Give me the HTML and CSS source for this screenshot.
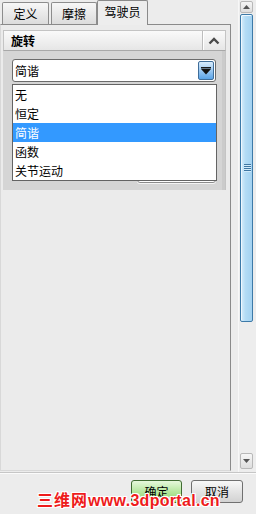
FILE: index.html
```html
<!DOCTYPE html>
<html lang="zh">
<head>
<meta charset="utf-8">
<link rel="stylesheet" href="styles.css">
</head>
<body>
<div class="window">
  <div class="main">
    <div class="left">
      <div class="tabs">
        <div class="tab tab-def">定义</div>
        <div class="tab tab-fric">摩擦</div>
        <div class="tab tab-active">驾驶员</div>
      </div>
      <div class="page">
        <div class="panel">
          <div class="panel-head">
            <span class="panel-title">旋转</span>
            <div class="collapse">
              <svg width="12" height="8" viewBox="0 0 12 8"><path d="M1.5 6.5 L6 2 L10.5 6.5" fill="none" stroke="#4a4a4a" stroke-width="2.4"/></svg>
            </div>
          </div>
          <div class="panel-body">
            <div class="combo">
              <span class="combo-text">简谐</span>
              <div class="combo-btn">
                <svg width="12" height="10" viewBox="0 0 12 10"><rect x="1" y="1" width="10" height="1.5" fill="#1a1a1a"/><path d="M1 3 L11 3 L6 8.5 Z" fill="#111"/></svg>
              </div>
            </div>
            <div class="hidden-field"></div>
            <ul class="list">
              <li>无</li>
              <li>恒定</li>
              <li class="sel">简谐</li>
              <li>函数</li>
              <li>关节运动</li>
            </ul>
          </div>
        </div>
      </div>
    </div>
    <div class="scrollbar">
      <div class="sb-btn sb-up"><svg width="7" height="4" viewBox="0 0 7 4"><path d="M0 4 L3.5 0 L7 4 Z" fill="#555"/></svg></div>
      <div class="sb-thumb">
        <div class="grip"><i></i><i></i><i></i><i></i></div>
      </div>
      <div class="sb-space"></div>
      <div class="sb-btn sb-down"><svg width="7" height="4" viewBox="0 0 7 4"><path d="M0 0 L7 0 L3.5 4 Z" fill="#555"/></svg></div>
    </div>
  </div>
  <div class="footer">
    <div class="btn btn-ok">确定</div>
    <div class="btn btn-cancel">取消</div>
  </div>
  <div class="watermark"><span class="wm-cn">三维网</span><span class="wm-en">www.3dportal.cn</span></div>
</div>
</body>
</html>
```
FILE: styles.css
```css
* { box-sizing: border-box; }
html, body { margin: 0; padding: 0; }
body {
  width: 256px;
  height: 514px;
  overflow: hidden;
  background: #ececec;
  font-family: "Noto Sans CJK SC", "Liberation Sans", sans-serif;
  font-size: 12px;
  color: #000;
}
.window { position: relative; width: 256px; height: 514px; display: flex; flex-direction: column; }
.main { height: 472px; display: flex; }
.left { width: 238px; display: flex; flex-direction: column; }

.tabs { height: 24px; display: flex; align-items: flex-end; position: relative; z-index: 2; }
.tab {
  height: 22px;
  border: 1px solid #8d8d8d;
  border-bottom: none;
  border-radius: 2px 2px 0 0;
  background: linear-gradient(#f7f7f7, #dcdcdc);
  display: flex; align-items: center; justify-content: center;
  line-height: 1;
  padding-top: 1px;
}
.tab-def { margin-left: 2px; width: 47px; }
.tab-fric { margin-left: 2px; width: 46px; }
.tab-active {
  margin-left: 0; width: 51px; height: 25px; margin-bottom: -1px;
  background: #ededed; border-color: #8a8a8a;
  padding-top: 0; padding-bottom: 2px;
}

.page {
  width: 231px;
  height: 447px;
  border: 1px solid #8a8a8a;
  border-left-color: #d8d8d8;
  border-bottom-color: #d8d8d8;
  background: #ebebeb;
  padding: 5px 4px 0 2px;
}
.panel { width: 223px; }
.panel-head {
  height: 21px;
  display: flex; align-items: center; justify-content: space-between;
  background: linear-gradient(#fafafa, #e6e6e6);
  border: 1px solid #c4c4c4;
  border-bottom-color: #a8a8a8;
}
.panel-title { font-weight: bold; padding-left: 7px; font-size: 12px; line-height: 1; }
.collapse {
  width: 23px; height: 19px;
  border-left: 1px solid #bdbdbd;
  box-shadow: inset 1px 0 #fff;
  display: flex; align-items: center; justify-content: center;
}
.panel-body {
  position: relative;
  background: #d5d5d5;
  border-right: 1px solid #c4c4c4;
  box-shadow: inset -3px 0 #cbcbcb;
  padding: 8px 0 7px 9px;
}
.combo {
  width: 204px; height: 23px;
  background: #fff;
  border: 1px solid #6b6b6b;
  border-radius: 3px;
  display: flex; align-items: center; justify-content: space-between;
  padding: 0 1px 0 2px;
}
.combo-text { line-height: 1; }
.combo-btn {
  width: 16px; height: 19px;
  border: 1px solid #3f6d99;
  border-radius: 2px;
  background: linear-gradient(#d8ecfc, #9cc9f2 50%, #5aa4e8);
  display: flex; align-items: center; justify-content: center;
}
.hidden-field {
  margin: 79px 0 0 125px;
  width: 79px; height: 22px;
  border: 1px solid #8c8c8c;
  border-radius: 3px;
  background: #fff;
  box-shadow: 0 1px 0 #f4f4f4;
}
.list {
  position: absolute; left: 9px; top: 33px;
  width: 205px;
  margin: 0; padding: 0; list-style: none;
  background: #fff;
  border: 1px solid #646464;
}
.list li { height: 19px; line-height: 19px; padding-left: 2px; }
.list li.sel { background: #3399ff; color: #fff; }

.scrollbar {
  width: 18px;
  display: flex; flex-direction: column;
  padding: 1px 3px 3px 1px;
  background: #ededed;
  border-left: 1px solid #f7f7f7;
}
.sb-btn {
  height: 12px;
  border: 1px solid #b8b8b8;
  border-radius: 2px;
  background: linear-gradient(#f6f6f6, #dedede);
  display: flex; align-items: center; justify-content: center;
}
.sb-down { height: 16px; }
.sb-thumb {
  margin-top: 1px;
  height: 308px;
  border: 1px solid #3d7aa8;
  border-radius: 2px;
  background: linear-gradient(90deg, #d9eefb, #b4dcf5 40%, #a3d2f1);
  box-shadow: inset 1px 1px #eef8ff;
  position: relative;
}
.grip {
  position: absolute; left: 3px; top: 149px;
  display: flex; flex-direction: column; gap: 1px;
}
.grip i { display: block; width: 7px; height: 1px; background: #3f77a3; box-shadow: 0 1px #d2ebfa; }
.sb-space { flex: 1; }

.footer {
  flex: 1;
  border-top: 1px solid #c6c6c6;
  box-shadow: inset 0 1px #fbfbfb;
  display: flex; justify-content: flex-end; align-items: flex-start;
  gap: 9px;
  padding: 7px 13px 0 0;
}
.btn {
  height: 23px;
  border-radius: 3px;
  display: flex; align-items: center; justify-content: center;
  line-height: 1;
}
.btn-ok {
  width: 51px;
  border: 1px solid #3f6b32;
  background: linear-gradient(#e6f8dc, #b6e79f 50%, #8dd56b);
}
.btn-cancel {
  width: 52px;
  border: 1px solid #707070;
  background: linear-gradient(#f8f8f8, #e4e4e4 50%, #d2d2d2);
}
.watermark {
  position: absolute; left: 37px; top: 491px;
  color: #ee1c1c;
  font-weight: bold;
  white-space: nowrap;
  line-height: 1;
  text-shadow: 1px 0 #fff, -1px 0 #fff, 0 1px #fff, 0 -1px #fff, 1px 1px #fff, -1px -1px #fff, 1px -1px #fff, -1px 1px #fff;
}
.wm-cn { font-size: 16px; letter-spacing: 1px; }
.wm-en { font-family: "Liberation Sans", sans-serif; font-size: 16px; letter-spacing: 0.3px; }
```
